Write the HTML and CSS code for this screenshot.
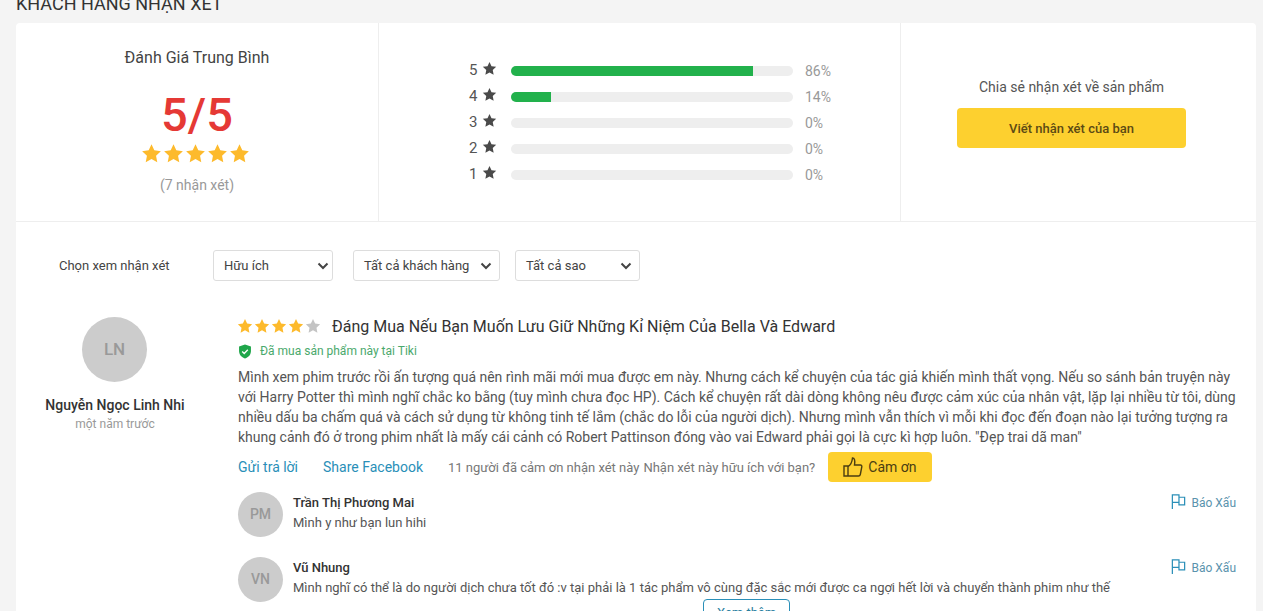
FILE: index.html
```html
<!DOCTYPE html>
<html lang="vi">
<head>
    <meta charset="UTF-8">
    <title>Khách hàng nhận xét</title>
    <link rel="stylesheet" href="styles.css">
</head>
<body>
    <svg class="defs" width="0" height="0">
        <symbol id="star" viewBox="0 0 24 24"><path d="M12 1.500l3.200 6.900 7.500.9-5.500 5.200 1.400 7.500L12 18.400l-6.600 3.600 1.400-7.500L1.300 9.300l7.500-.9z"/></symbol>
        <symbol id="flag" viewBox="0 0 18 18"><path d="M2.500 17V2h7v2.500h6v8h-6V10h-7M9.500 2v8" fill="none" stroke="currentColor" stroke-width="1.300"/></symbol>
        <symbol id="chev" viewBox="0 0 12 8"><path d="M1.500 1.500L6 6l4.500-4.500" fill="none" stroke="currentColor" stroke-width="2"/></symbol>
    </svg>

    <h2 class="page-title">KHÁCH HÀNG NHẬN XÉT</h2>

    <div class="card">
        <div class="summary">
            <div class="avg">
                <h4>Đánh Giá Trung Bình</h4>
                <div class="score">5/5</div>
                <div class="stars big">
                    <svg><use href="#star"/></svg><svg><use href="#star"/></svg><svg><use href="#star"/></svg><svg><use href="#star"/></svg><svg><use href="#star"/></svg>
                </div>
                <div class="count">(7 nhận xét)</div>
            </div>
            <div class="bars">
                <div class="bar-row"><span class="num">5</span><svg class="bar-star"><use href="#star"/></svg><div class="track"><div class="fill" style="width:85.7%"></div></div><span class="pct">86%</span></div>
                <div class="bar-row"><span class="num">4</span><svg class="bar-star"><use href="#star"/></svg><div class="track"><div class="fill" style="width:14.3%"></div></div><span class="pct">14%</span></div>
                <div class="bar-row"><span class="num">3</span><svg class="bar-star"><use href="#star"/></svg><div class="track"></div><span class="pct">0%</span></div>
                <div class="bar-row"><span class="num">2</span><svg class="bar-star"><use href="#star"/></svg><div class="track"></div><span class="pct">0%</span></div>
                <div class="bar-row"><span class="num">1</span><svg class="bar-star"><use href="#star"/></svg><div class="track"></div><span class="pct">0%</span></div>
            </div>
            <div class="share">
                <p>Chia sẻ nhận xét về sản phẩm</p>
                <button class="write-btn">Viết nhận xét của bạn</button>
            </div>
        </div>

        <div class="filters">
            <span class="filter-label">Chọn xem nhận xét</span>
            <div class="select w1">Hữu ích<svg><use href="#chev"/></svg></div>
            <div class="select w2">Tất cả khách hàng<svg><use href="#chev"/></svg></div>
            <div class="select w3">Tất cả sao<svg><use href="#chev"/></svg></div>
        </div>

        <div class="review">
            <div class="author">
                <div class="avatar large">LN</div>
                <div class="author-name">Nguyễn Ngọc Linh Nhi</div>
                <div class="author-time">một năm trước</div>
            </div>
            <div class="content">
                <div class="review-head">
                    <div class="stars small">
                        <svg><use href="#star"/></svg><svg><use href="#star"/></svg><svg><use href="#star"/></svg><svg><use href="#star"/></svg><svg class="off"><use href="#star"/></svg>
                    </div>
                    <h3>Đáng Mua Nếu Bạn Muốn Lưu Giữ Những Kỉ Niệm Của Bella Và Edward</h3>
                </div>
                <div class="bought">
                    <svg viewBox="0 0 16 16"><path d="M8 0l6.800 2.400v5C14.800 11.500 12 14.600 8 16c-4-1.400-6.800-4.500-6.800-8.600v-5z" fill="#1fa64a"/><path d="M4.800 8l2.300 2.300 4.100-4.300" fill="none" stroke="#fff" stroke-width="1.500"/></svg>
                    Đã mua sản phẩm này tại Tiki
                </div>
                <p class="review-text">Mình xem phim trước rồi ấn tượng quá nên rình mãi mới mua được em này. Nhưng cách kể chuyện của tác giả khiến mình thất vọng. Nếu so sánh bản truyện này<br>với Harry Potter thì mình nghĩ chắc ko bằng (tuy mình chưa đọc HP). Cách kể chuyện rất dài dòng không nêu được cảm xúc của nhân vật, lặp lại nhiều từ tôi, dùng<br>nhiều dấu ba chấm quá và cách sử dụng từ không tinh tế lắm (chắc do lỗi của người dịch). Nhưng mình vẫn thích vì mỗi khi đọc đến đoạn nào lại tưởng tượng ra<br>khung cảnh đó ở trong phim nhất là mấy cái cảnh có Robert Pattinson đóng vào vai Edward phải gọi là cực kì hợp luôn. "Đẹp trai dã man"</p>
                <div class="actions">
                    <a class="link">Gửi trả lời</a>
                    <a class="link">Share Facebook</a>
                    <span class="thanks">11 người đã cảm ơn nhận xét này</span>
                    <span class="thanks">Nhận xét này hữu ích với bạn?</span>
                    <button class="thank-btn">
                        <svg viewBox="0 0 20 20"><path d="M1 9h4v10H1zM5 9.500c2-1 4-4 4.500-8.500 2 0 2.800 2.200 2 7h6c1 0 1.500.8 1.300 1.800l-1.500 7.700c-.2 1-.9 1.500-1.800 1.500H5" fill="none" stroke="currentColor" stroke-width="1.400"/></svg>
                        Cảm ơn
                    </button>
                </div>

                <div class="reply">
                    <div class="avatar">PM</div>
                    <div class="reply-body">
                        <div class="reply-name">Trần Thị Phương Mai</div>
                        <div class="reply-text">Mình y như bạn lun hihi</div>
                    </div>
                    <a class="report"><svg><use href="#flag"/></svg>Báo Xấu</a>
                </div>
                <div class="reply">
                    <div class="avatar">VN</div>
                    <div class="reply-body">
                        <div class="reply-name">Vũ Nhung</div>
                        <div class="reply-text">Mình nghĩ có thể là do người dịch chưa tốt đó :v tại phải là 1 tác phẩm vô cùng đặc sắc mới được ca ngợi hết lời và chuyển thành phim như thế</div>
                    </div>
                    <a class="report"><svg><use href="#flag"/></svg>Báo Xấu</a>
                </div>
                <button class="more-btn">Xem thêm</button>
            </div>
        </div>
    </div>
</body>
</html>
```

FILE: styles.css
```css
html, body {
    height: 611px;
    overflow: hidden;
}
body {
    margin: 0;
    padding: 0 7px 0 16px;
    background: #f4f4f4;
    font-family: Roboto, "Liberation Sans", sans-serif;
    color: #333;
}
.defs { display: block; height: 0; }
.page-title {
    margin: -8px 0 7px;
    height: 24px;
    font-size: 18px;
    line-height: 24px;
    font-weight: 400;
    color: #333;
}
.card {
    background: white;
    border-radius: 4px;
}

/* tong quan */
.summary {
    display: grid;
    grid-template-columns: 363px 522px 355px;
    height: 198px;
    border-bottom: 1px solid #eee;
}
.avg {
    border-right: 1px solid #eee;
    text-align: center;
    padding-top: 25px;
    box-sizing: border-box;
}
.avg h4 {
    margin: 0;
    font-size: 16px;
    line-height: 20px;
    font-weight: 400;
    color: #444;
}
.score {
    margin-top: 20px;
    font-size: 47px;
    line-height: 54px;
    font-weight: 500;
    color: #e53935;
}
.stars { display: flex; }
.stars svg { fill: #fdba2c; }
.stars .off { fill: #c4c4c4; }
.stars.big {
    justify-content: center;
    margin-top: 1px;
    padding-right: 4px;
    gap: 1px;
}
.stars.big svg { width: 21px; height: 21px; }
.count {
    margin-top: 12px;
    font-size: 14px;
    line-height: 18px;
    color: #999;
}
.bars {
    border-right: 1px solid #eee;
    padding: 35px 0 0 90px;
    box-sizing: border-box;
}
.bar-row {
    display: flex;
    align-items: center;
    height: 26px;
}
.num {
    width: 13px;
    margin-top: -2px;
    font-size: 15px;
    color: #555;
}
.bar-star {
    width: 15px;
    height: 15px;
    margin-top: -5px;
    fill: #4a4a4a;
}
.track {
    width: 282px;
    height: 10px;
    margin-left: 14px;
    background: #eee;
    border-radius: 5px;
    overflow: hidden;
}
.fill {
    height: 100%;
    background: #22b14c;
}
.pct {
    margin-left: 12px;
    font-size: 14px;
    color: #999;
}
.share {
    text-align: center;
    padding: 54px 14px 0 0;
    box-sizing: border-box;
}
.share p {
    margin: 0 0 11px;
    font-size: 14px;
    line-height: 20px;
    color: #555;
}
.write-btn {
    width: 229px;
    height: 40px;
    border: none;
    border-radius: 4px;
    background: #fdd02f;
    font-family: inherit;
    font-size: 13px;
    font-weight: 500;
    color: #5c4a14;
}

/* bo loc */
.filters {
    display: flex;
    align-items: center;
    padding: 28px 0 0 43px;
    height: 31px;
}
.filter-label {
    width: 154px;
    margin-top: -1px;
    font-size: 13px;
    color: #444;
}
.select {
    display: flex;
    align-items: center;
    justify-content: space-between;
    box-sizing: border-box;
    height: 31px;
    padding: 0 7px 0 10px;
    border: 1px solid #ddd;
    border-radius: 3px;
    font-size: 13px;
    color: #444;
}
.select svg { width: 12px; height: 8px; color: #444; }
.w1 { width: 120px; margin-right: 20px; padding-right: 3px; }
.w2 { width: 147px; margin-right: 15px; }
.w3 { width: 125px; }

/* nhan xet */
.review {
    display: flex;
    padding-top: 36px;
}
.author {
    width: 198px;
    margin-right: 24px;
    text-align: center;
}
.avatar {
    flex: none;
    width: 45px;
    height: 45px;
    border-radius: 50%;
    background: #ccc;
    color: #999;
    font-size: 14px;
    font-weight: 500;
    line-height: 45px;
    text-align: center;
}
.avatar.large {
    width: 65px;
    height: 65px;
    margin: 0 0 0 66px;
    font-size: 17px;
    line-height: 65px;
}
.author-name {
    margin-top: 13px;
    font-size: 14px;
    line-height: 20px;
    font-weight: 500;
    color: #333;
}
.author-time {
    margin-top: 1px;
    font-size: 12px;
    line-height: 17px;
    color: #999;
}
.content {
    flex: 1;
    margin-top: -1px;
    padding-right: 20px;
}
.review-head {
    display: flex;
    align-items: center;
    height: 20px;
}
.stars.small {
    gap: 1px;
    margin: 0 11px 0 -1px;
}
.stars.small svg { width: 16px; height: 16px; }
.review-head h3 {
    margin: 0;
    font-size: 16px;
    font-weight: 400;
    color: #333;
}
.bought {
    display: flex;
    align-items: center;
    gap: 8px;
    margin-top: 5px;
    font-size: 12px;
    line-height: 20px;
    color: #4aa96c;
}
.bought svg { width: 14px; height: 15px; }
.review-text {
    margin: 6px 0 0;
    font-size: 14px;
    line-height: 20px;
    color: #555;
    white-space: nowrap;
}
.actions {
    display: flex;
    align-items: center;
    margin-top: 5px;
    height: 30px;
}
.link {
    margin-right: 25px;
    font-size: 14px;
    color: #2a8fb8;
}
.thanks {
    margin-right: 4px;
    font-size: 13px;
    color: #777;
}
.thank-btn {
    display: flex;
    align-items: center;
    gap: 5px;
    height: 30px;
    margin-left: 9px;
    padding: 0 16px 0 15px;
    border: none;
    border-radius: 4px;
    background: #fdd02f;
    font-family: inherit;
    font-size: 14px;
    color: #4a3d12;
}
.thank-btn svg { width: 20px; height: 20px; }
.reply {
    display: flex;
    margin-top: 10px;
    height: 45px;
}
.reply + .reply { margin-top: 20px; }
.reply-body {
    flex: 1;
    margin-left: 10px;
    padding-top: 1px;
}
.reply-name {
    font-size: 13px;
    line-height: 20px;
    font-weight: 500;
    color: #333;
}
.reply-text {
    font-size: 13px;
    line-height: 20px;
    color: #555;
    white-space: nowrap;
}
.report {
    display: flex;
    align-items: flex-start;
    gap: 5px;
    padding-top: 1px;
    font-size: 12px;
    line-height: 20px;
    color: #5a93ad;
}
.report svg {
    width: 17px;
    height: 17px;
    color: #2a8fb8;
}
.more-btn {
    display: block;
    width: 87px;
    height: 26px;
    margin: -3px 0 0 465px;
    padding: 0;
    border: 1px solid #2a8fb8;
    border-radius: 4px;
    background: white;
    font-family: inherit;
    font-size: 13px;
    color: #2a7fa0;
}
```
